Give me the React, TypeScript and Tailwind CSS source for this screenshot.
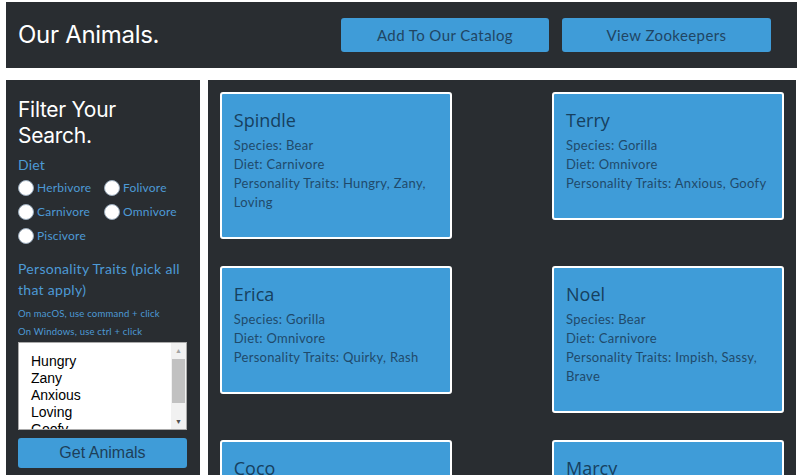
import React from "react";

const ANIMALS = [
  { name: "Spindle", species: "Bear", diet: "Carnivore", traits: "Hungry, Zany, Loving" },
  { name: "Terry", species: "Gorilla", diet: "Omnivore", traits: "Anxious, Goofy" },
  { name: "Erica", species: "Gorilla", diet: "Omnivore", traits: "Quirky, Rash" },
  { name: "Noel", species: "Bear", diet: "Carnivore", traits: "Impish, Sassy, Brave" },
  { name: "Coco", species: "Gorilla", diet: "Herbivore", traits: "Loving" },
  { name: "Marcy", species: "Bear", diet: "Omnivore", traits: "Goofy" },
];

const DIETS = ["Herbivore", "Folivore", "Carnivore", "Omnivore", "Piscivore"];
const TRAITS = ["Hungry", "Zany", "Anxious", "Loving", "Goofy"];

function Radio({ label }: { label: string }) {
  return (
    <label className="flex items-center h-6 text-[12px] text-[#4d9ad6] tracking-[0.2px]">
      <span className="w-4 h-4 rounded-full bg-white border border-[#9ab] shrink-0" />
      <span className="ml-[3px]">{label}</span>
    </label>
  );
}

function AnimalCard({ a }: { a: (typeof ANIMALS)[number] }) {
  return (
    <div className="w-[232px] border-2 border-white rounded-[3px] bg-[#3f9cd8] px-[12px] pt-[14px] pb-[25px] text-[#1f4a6b] tracking-[0.3px]">
      <h3 className="text-[18px] leading-[24px] text-[#16405f] font-['Open_Sans',sans-serif] tracking-normal">{a.name}</h3>
      <p className="text-[13px] leading-[19px] mt-[4px]">Species: {a.species}</p>
      <p className="text-[13px] leading-[19px]">Diet: {a.diet}</p>
      <p className="text-[13px] leading-[19px]">Personality Traits: {a.traits}</p>
    </div>
  );
}

export default function App() {
  return (
    <div className="w-[802px] h-[475px] overflow-hidden bg-white font-['Lato',sans-serif]">
      {/* Header */}
      <header className="mx-[6px] mt-[2px] w-[791px] h-[66px] bg-[#292d31] flex items-center pl-[12px] pr-[26px]">
        <h1 className="text-[24px] text-white font-['Inter',sans-serif] tracking-[-0.3px]">Our Animals.</h1>
        <div className="ml-auto flex gap-[13px]">
          <button className="w-[208px] h-[34px] rounded-[3px] bg-[#3f9cd8] text-[15px] text-[#1f4563] tracking-[0.4px]">
            Add To Our Catalog
          </button>
          <button className="w-[209px] h-[34px] rounded-[3px] bg-[#3f9cd8] text-[15px] text-[#1f4563] tracking-[0.4px]">
            View Zookeepers
          </button>
        </div>
      </header>

      <div className="flex gap-[8px] mx-[6px] mt-[12px]">
        {/* Sidebar */}
        <aside className="w-[194px] h-[395px] bg-[#292d31] px-[12px] pt-[17px]">
          <h2 className="text-[21px] leading-[26px] text-white font-['Inter',sans-serif] tracking-[-0.3px]">
            Filter Your Search.
          </h2>
          <p className="mt-[6px] text-[14px] leading-[20px] text-[#4d9ad6] tracking-[0.2px]">Diet</p>
          <div className="grid grid-cols-[86px_1fr] mt-[1px]">
            {DIETS.map((d) => (
              <Radio key={d} label={d} />
            ))}
          </div>
          <p className="mt-[10px] text-[14px] leading-[21px] text-[#4d9ad6] tracking-[0.3px]">
            Personality Traits (pick all that apply)
          </p>
          <p className="mt-[5px] text-[9.5px] leading-[18px] text-[#4d9ad6] tracking-[0.2px]">On macOS, use command + click</p>
          <p className="text-[9.5px] leading-[18px] text-[#4d9ad6] tracking-[0.2px]">On Windows, use ctrl + click</p>
          <div className="mt-[1px] w-[169px] h-[88px] bg-white border border-[#aaa] flex overflow-hidden">
            <div className="flex-1 pl-[12px] pt-[10px] font-['Liberation_Sans',sans-serif] text-[14px] leading-[17px] text-black">
              {TRAITS.map((t) => (
                <div key={t}>{t}</div>
              ))}
            </div>
            <div className="w-[15px] bg-[#f1f1f1] flex flex-col items-center">
              <span className="h-[15px] text-[7px] leading-[15px] text-[#a3a3a3]">▲</span>
              <div className="w-[13px] h-[44px] bg-[#c1c1c1] mt-[1px]" />
              <span className="mt-auto h-[15px] text-[7px] leading-[15px] text-[#505050]">▼</span>
            </div>
          </div>
          <button className="mt-[8px] w-[169px] h-[30px] rounded-[3px] bg-[#3f9cd8] font-['Liberation_Sans',sans-serif] text-[16px] text-[#1d3f5a]">
            Get Animals
          </button>
        </aside>

        {/* Animals */}
        <main className="w-[589px] h-[395px] bg-[#292d31] px-[12px] pt-[12px] overflow-hidden">
          <div className="grid grid-cols-[232px_232px] justify-between items-start gap-y-[27px]">
            {ANIMALS.map((a) => (
              <AnimalCard key={a.name} a={a} />
            ))}
          </div>
        </main>
      </div>
    </div>
  );
}
